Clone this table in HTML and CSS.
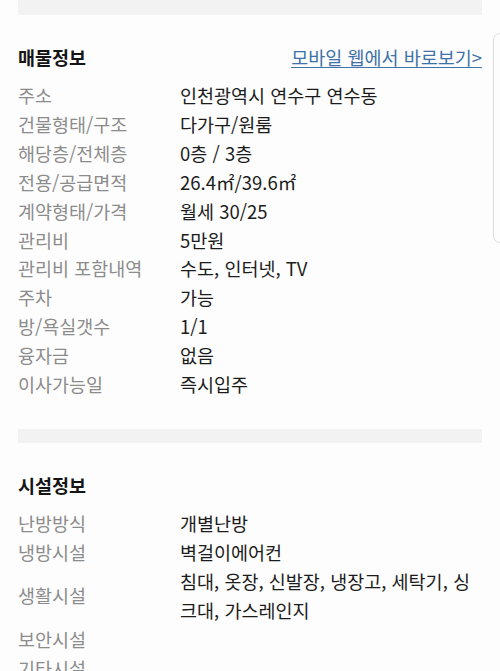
FILE: index.html
```html
<!DOCTYPE html>
<html lang="ko">
<head>
<meta charset="utf-8">
<link rel="stylesheet" href="styles.css">
</head>
<body>
<div class="page">
  <div class="band band-top"></div>
  <section class="section">
    <div class="head">
      <h2 class="title">매물정보</h2>
      <a class="link" href="#">모바일 웹에서 바로보기&gt;</a>
    </div>
    <div class="grid">
      <div class="label">주소</div><div class="value">인천광역시 연수구 연수동</div>
      <div class="label">건물형태/구조</div><div class="value">다가구/원룸</div>
      <div class="label">해당층/전체층</div><div class="value">0층 / 3층</div>
      <div class="label">전용/공급면적</div><div class="value">26.4㎡/39.6㎡</div>
      <div class="label">계약형태/가격</div><div class="value">월세 30/25</div>
      <div class="label">관리비</div><div class="value">5만원</div>
      <div class="label">관리비 포함내역</div><div class="value">수도, 인터넷, TV</div>
      <div class="label">주차</div><div class="value">가능</div>
      <div class="label">방/욕실갯수</div><div class="value">1/1</div>
      <div class="label">융자금</div><div class="value">없음</div>
      <div class="label">이사가능일</div><div class="value">즉시입주</div>
    </div>
  </section>
  <div class="band band-mid"></div>
  <section class="section">
    <div class="head">
      <h2 class="title">시설정보</h2>
    </div>
    <div class="grid">
      <div class="label">난방방식</div><div class="value">개별난방</div>
      <div class="label">냉방시설</div><div class="value">벽걸이에어컨</div>
      <div class="label">생활시설</div><div class="value">침대, 옷장, 신발장, 냉장고, 세탁기, 싱<br>크대, 가스레인지</div>
      <div class="label">보안시설</div><div class="value"></div>
      <div class="label">기타시설</div><div class="value"></div>
    </div>
  </section>
  <div class="edge"></div>
</div>
</body>
</html>
```

FILE: styles.css
```css
html, body {
  margin: 0;
  padding: 0;
  background: #fdfdfd;
}
body {
  font-family: "Noto Sans CJK KR", "Noto Sans", sans-serif;
  font-size: 18.5px;
  overflow: hidden;
  height: 671px;
}
.page {
  position: relative;
  padding: 0 18px;
  height: 671px;
  overflow: hidden;
}
.band {
  background: #f2f2f2;
  height: 14px;
}
.band-top {
  height: 15px;
}
.band-mid {
  margin-top: 30px;
}
.section {
  padding-top: 28px;
}
.head {
  display: flex;
  justify-content: space-between;
  align-items: center;
  height: 29px;
  margin-bottom: 9px;
}
.title {
  margin: 0;
  font-size: 18.5px;
  font-weight: 700;
  color: #151515;
  line-height: 29px;
}
.link {
  color: #3e72a8;
  text-decoration: underline;
  text-underline-offset: 2px;
  text-decoration-thickness: 1px;
  line-height: 29px;
}
.grid {
  display: grid;
  grid-template-columns: 162px 1fr;
  line-height: 28.9px;
}
.label {
  color: #8c8c8c;
  align-self: center;
  white-space: nowrap;
}
.value {
  color: #1c1c1c;
  white-space: nowrap;
  min-height: 28.9px;
}
.edge {
  position: absolute;
  left: 493px;
  top: 33px;
  width: 30px;
  height: 208px;
  border: 1px solid #dedede;
  border-radius: 7px;
}
```
